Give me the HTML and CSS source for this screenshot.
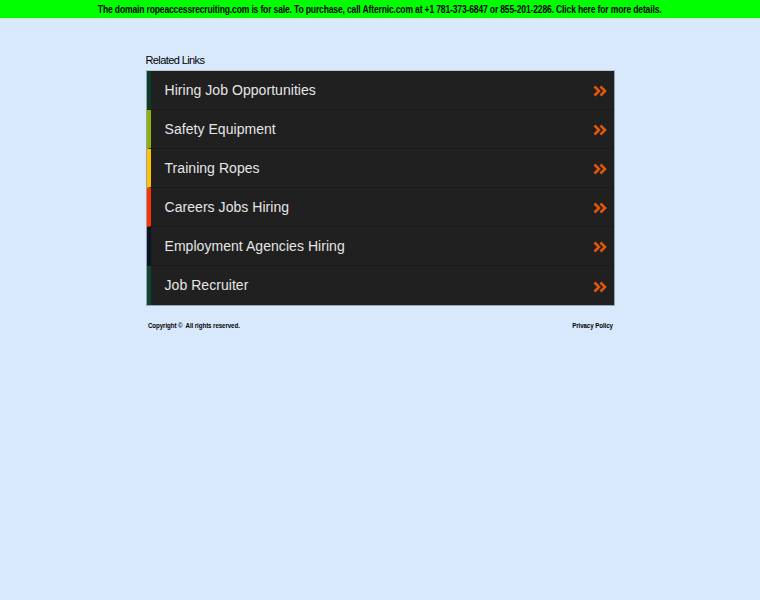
FILE: index.html
```html
<!DOCTYPE html>
<html>
<head>
<meta charset="utf-8">
<link rel="stylesheet" href="styles.css">
</head>
<body>
<div class="topbar"><span class="squeeze">The domain ropeaccessrecruiting.com is for sale. To purchase, call Afternic.com at +1 781-373-6847 or 855-201-2286. Click here for more details.</span></div>
<div class="wrap">
  <div class="title">Related Links</div>
  <ul class="links">
    <li class="c1"><span class="txt">Hiring Job Opportunities</span><svg class="arr" width="14" height="12" viewBox="0 0 14 12"><path d="M1.5 1.5 L6 6 L1.5 10.5 M7.5 1.5 L12 6 L7.5 10.5" fill="none" stroke="#e0580c" stroke-width="2.6"/></svg></li>
    <li class="c2"><span class="txt">Safety Equipment</span><svg class="arr" width="14" height="12" viewBox="0 0 14 12"><path d="M1.5 1.5 L6 6 L1.5 10.5 M7.5 1.5 L12 6 L7.5 10.5" fill="none" stroke="#e0580c" stroke-width="2.6"/></svg></li>
    <li class="c3"><span class="txt">Training Ropes</span><svg class="arr" width="14" height="12" viewBox="0 0 14 12"><path d="M1.5 1.5 L6 6 L1.5 10.5 M7.5 1.5 L12 6 L7.5 10.5" fill="none" stroke="#e0580c" stroke-width="2.6"/></svg></li>
    <li class="c4"><span class="txt">Careers Jobs Hiring</span><svg class="arr" width="14" height="12" viewBox="0 0 14 12"><path d="M1.5 1.5 L6 6 L1.5 10.5 M7.5 1.5 L12 6 L7.5 10.5" fill="none" stroke="#e0580c" stroke-width="2.6"/></svg></li>
    <li class="c5"><span class="txt">Employment Agencies Hiring</span><svg class="arr" width="14" height="12" viewBox="0 0 14 12"><path d="M1.5 1.5 L6 6 L1.5 10.5 M7.5 1.5 L12 6 L7.5 10.5" fill="none" stroke="#e0580c" stroke-width="2.6"/></svg></li>
    <li class="c6"><span class="txt">Job Recruiter</span><svg class="arr" width="14" height="12" viewBox="0 0 14 12"><path d="M1.5 1.5 L6 6 L1.5 10.5 M7.5 1.5 L12 6 L7.5 10.5" fill="none" stroke="#e0580c" stroke-width="2.6"/></svg></li>
  </ul>
  <div class="footer">
    <span class="fl">Copyright ©&nbsp; All rights reserved.</span>
    <span class="fr">Privacy Policy</span>
  </div>
</div>
</body>
</html>
```
FILE: styles.css
```css
html, body {
  margin: 0;
  padding: 0;
}
body {
  background: #d9e9fd;
  font-family: "Liberation Sans", Arial, sans-serif;
  width: 760px;
  height: 600px;
}
.topbar {
  background: #00ff00;
  height: 18px;
  line-height: 19px;
  text-align: center;
  font-size: 11px;
  font-weight: bold;
  color: #000;
  letter-spacing: -0.2px;
  border-bottom: 1px solid #c8e8c8;
  white-space: nowrap;
  overflow: hidden;
}
.squeeze {
  display: inline-block;
  transform: scaleX(0.777);
  transform-origin: center;
}
.wrap {
  width: 469px;
  margin: 0 auto;
  padding-top: 35px;
}
.title {
  font-size: 11px;
  color: #000;
  height: 16px;
  line-height: 13px;
  letter-spacing: -0.6px;
}
.links {
  list-style: none;
  margin: 0;
  padding: 0;
  border: 1px solid #9aa3ad;
  border-top-color: #bcc4cc;
  background: #202020;
}
.links li {
  display: flex;
  align-items: center;
  justify-content: space-between;
  height: 38px;
  border-bottom: 1px solid #1a1a1a;
  border-left: 4px solid #0c3d2a;
  padding-left: 14px;
  padding-right: 7px;
}
.links li:last-child {
  border-bottom: none;
  height: 39px;
}
.links li.c1 { border-left-color: #0b3d2b; }
.links li.c2 { border-left-color: #8cb400; }
.links li.c3 { border-left-color: #ffc400; }
.links li.c4 { border-left-color: #ff3300; }
.links li.c5 { border-left-color: #071426; }
.links li.c6 { border-left-color: #0c4630; }
.txt {
  color: #e6e6e6;
  font-size: 14px;
  letter-spacing: 0.05px;
  margin-top: -1px;
}
.arr {
  display: block;
  margin-top: 2px;
}
.footer {
  display: flex;
  justify-content: space-between;
  padding: 15px 2px 0 2px;
  font-size: 8px;
  font-weight: bold;
  color: #000;
  letter-spacing: -0.1px;
  white-space: nowrap;
}
.fl {
  display: inline-block;
  transform: scaleX(0.77);
  transform-origin: left center;
}
.fr {
  display: inline-block;
  transform: scaleX(0.77);
  transform-origin: right center;
}
```
